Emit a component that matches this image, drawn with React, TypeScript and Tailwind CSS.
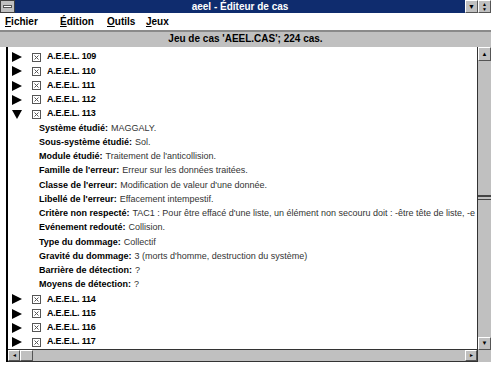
import React from 'react';

type Detail = { label: string; value: string };

const details: Detail[] = [
  { label: 'Système étudié:', value: 'MAGGALY.' },
  { label: 'Sous-système étudié:', value: 'Sol.' },
  { label: 'Module étudié:', value: "Traitement de l'anticollision." },
  { label: "Famille de l'erreur:", value: 'Erreur sur les données traitées.' },
  { label: "Classe de l'erreur:", value: "Modification de valeur d'une donnée." },
  { label: "Libellé de l'erreur:", value: 'Effacement intempestif.' },
  {
    label: 'Critère non respecté:',
    value: "TAC1 : Pour être effacé d'une liste, un élément non secouru doit : -être tête de liste, -e",
  },
  { label: 'Evénement redouté:', value: 'Collision.' },
  { label: 'Type du dommage:', value: 'Collectif' },
  { label: 'Gravité du dommage:', value: "3 (morts d'homme, destruction du système)" },
  { label: 'Barrière de détection:', value: '?' },
  { label: 'Moyens de détection:', value: '?' },
];

const Arrow = ({ down }: { down?: boolean }) => (
  <svg width="10" height="10" viewBox="0 0 10 10" className="shrink-0">
    {down ? <polygon points="0,1 10,1 5,10" fill="#000" /> : <polygon points="0,0 10,5 0,10" fill="#000" />}
  </svg>
);

const Check = () => (
  <svg width="9" height="9" viewBox="0 0 9 9" className="shrink-0">
    <rect x="0.5" y="0.5" width="8" height="8" fill="#fff" stroke="#555" />
    <path d="M2.5 2.5 L6.5 6.5 M6.5 2.5 L2.5 6.5" stroke="#555" strokeWidth="1" />
  </svg>
);

const Case = ({ n, open }: { n: number; open?: boolean }) => (
  <div className="flex items-center h-[14.25px] pl-[4px]">
    <Arrow down={open} />
    <span className="ml-[10px]">
      <Check />
    </span>
    <span className="ml-[6px] font-bold text-[9px] text-black tracking-[-0.2px]">A.E.E.L. {n}</span>
  </div>
);

const Bevel = ({ className, children }: { className?: string; children?: React.ReactNode }) => (
  <div
    className={`flex items-center justify-center bg-[#c0c0c0] border border-t-white border-l-white border-r-[#555] border-b-[#555] ${className ?? ''}`}
  >
    {children}
  </div>
);

export default function App() {
  return (
    <div className="w-[495px] h-[370px] bg-white overflow-hidden font-['Liberation_Sans',Arial,sans-serif]">
      <div className="w-[491px] flex flex-col">
        {/* title bar */}
        <div className="flex h-[13px]">
          <div className="w-[15px] bg-[#c0c0c0] border border-[#404040] flex items-center justify-center">
            <div className="w-[9px] h-[3px] bg-white border border-[#555]" />
          </div>
          <div className="flex-1 bg-[#0f2c6e] text-white text-[10px] font-bold leading-[13px] text-center">
            aeel - Éditeur de cas
          </div>
          <Bevel className="w-[13px] h-[13px] text-[7px] leading-none">▼</Bevel>
          <Bevel className="w-[13px] h-[13px] flex-col text-[5px] leading-[5px]">
            <span>▲</span>
            <span>▼</span>
          </Bevel>
        </div>

        {/* menu bar */}
        <div className="flex h-[17px] items-center pl-[5px] text-[10px] font-bold text-black">
          <span className="w-[55px]">
            <u>F</u>ichier
          </span>
          <span className="w-[47px]">
            <u>É</u>dition
          </span>
          <span className="w-[39px]">
            <u>O</u>utils
          </span>
          <span>
            <u>J</u>eux
          </span>
        </div>

        {/* header */}
        <div className="h-[17px] bg-[#c0c0c0] border-t-2 border-[#8a8a8a] text-center text-[10px] font-bold leading-[14px] text-black">
          Jeu de cas 'AEEL.CAS'; 224 cas.
        </div>

        {/* body */}
        <div className="flex h-[315px]">
          <div className="flex-1 flex flex-col ml-[6px] border-l-2 border-black min-w-0">
            <div className="h-[302px] overflow-hidden pt-[3px]">
              {[109, 110, 111, 112].map((n) => (
                <Case key={n} n={n} />
              ))}
              <Case n={113} open />
              {details.map((d) => (
                <div
                  key={d.label}
                  className="h-[14.25px] pl-[31px] flex items-center whitespace-nowrap text-[9px] font-['Liberation_Sans_Narrow','Liberation_Sans',sans-serif]"
                >
                  <span className="font-bold text-black">{d.label}</span>
                  <span className="ml-[3px] text-[#333]">{d.value}</span>
                </div>
              ))}
              {[114, 115, 116, 117].map((n) => (
                <Case key={n} n={n} />
              ))}
            </div>
            {/* horizontal scrollbar */}
            <div className="h-[13px] flex bg-[#c0c0c0] border-t border-b border-[#333]">
              <Bevel className="w-[12px] h-full text-[6px]">◂</Bevel>
              <Bevel className="w-[13px] h-full" />
              <div className="flex-1" />
              <Bevel className="w-[12px] h-full text-[6px]">▸</Bevel>
            </div>
          </div>

          {/* vertical scrollbar */}
          <div className="w-[14px] flex flex-col bg-[#c0c0c0] border-l border-[#333]">
            <Bevel className="h-[14px] w-full text-[6px]">▲</Bevel>
            <div className="h-[134px]" />
            <div className="h-[5px] border-t-2 border-b border-[#444] bg-[#c0c0c0]" />
            <div className="flex-1" />
            <Bevel className="h-[13px] w-full text-[6px]">▼</Bevel>
            <div className="h-[12px]" />
          </div>
        </div>
      </div>
    </div>
  );
}
